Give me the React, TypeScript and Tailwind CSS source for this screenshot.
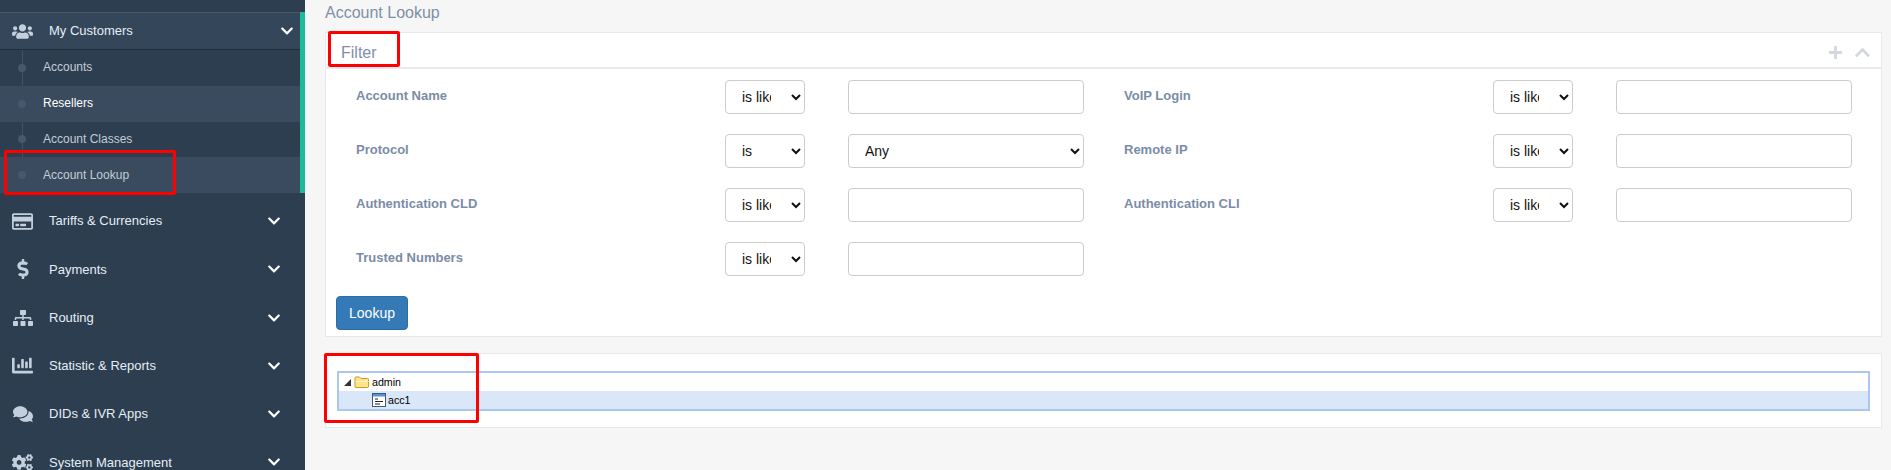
import type { ReactNode } from "react"
import {
  FaChartBar,
  FaChevronDown,
  FaChevronUp,
  FaCogs,
  FaComments,
  FaDollarSign,
  FaPlus,
  FaRegCreditCard,
  FaSitemap,
  FaUsers,
} from "react-icons/fa"

const subItems = [
  { label: "Accounts", shaded: false, strong: false },
  { label: "Resellers", shaded: true, strong: true },
  { label: "Account Classes", shaded: false, strong: false },
  { label: "Account Lookup", shaded: true, strong: false },
]

const menuItems = [
  { label: "Tariffs & Currencies", icon: <FaRegCreditCard className="h-[21px] w-[21px]" /> },
  { label: "Payments", icon: <FaDollarSign className="h-[20px] w-[20px]" /> },
  { label: "Routing", icon: <FaSitemap className="h-[20px] w-[20px]" /> },
  { label: "Statistic & Reports", icon: <FaChartBar className="h-[21px] w-[21px]" /> },
  { label: "DIDs & IVR Apps", icon: <FaComments className="h-[20px] w-[20px]" /> },
  { label: "System Management", icon: <FaCogs className="h-[21px] w-[21px]" /> },
]

function Sidebar() {
  return (
    <aside className="h-[470px] w-[305px] shrink-0 overflow-hidden bg-[#2c3e50] pt-3">
      <div className="border-r-[5px] border-r-[#1abc9c]">
        <div className="flex h-[38px] items-center border-t border-b border-t-[#4a5a6c] border-b-[#1f2d3d] bg-[#34465a] text-[13px] text-[#e6edf5]">
          <span className="flex w-[49px] justify-center pr-[5px] text-[#c3cfdd]">
            <FaUsers className="h-[21px] w-[21px]" />
          </span>
          <span>My Customers</span>
          <FaChevronDown className="ml-auto mr-[6px] h-[14px] w-[14px] text-white" />
        </div>
        <div className="relative">
          <div className="absolute bottom-0 left-[22px] top-0 w-px bg-[#3f5266]" />
          {subItems.map((item) => (
            <div
              key={item.label}
              className={`relative flex h-[35.75px] items-center pb-[1px] pl-[43px] text-[12px] ${item.shaded ? "bg-[#3a4b60]" : ""} ${item.strong ? "text-white" : "text-[#c4ccd6]"}`}
            >
              <span className="absolute left-[18px] top-1/2 h-[8px] w-[8px] -translate-y-1/2 rounded-full bg-[#46586c]" />
              {item.label}
            </div>
          ))}
        </div>
      </div>
      <div className="pt-[4px]">
        {menuItems.map((item) => (
          <div key={item.label} className="flex h-[48.25px] items-center text-[13px] text-[#e6edf5]">
            <span className="flex w-[49px] justify-center pr-[4px] text-[#c3cfdd]">{item.icon}</span>
            <span>{item.label}</span>
            <FaChevronDown className="ml-auto mr-[24px] h-[14px] w-[14px] text-white" />
          </div>
        ))}
      </div>
    </aside>
  )
}

function OpSelect({ value }: { value: string }) {
  return (
    <select
      defaultValue={value}
      className="h-[34px] w-[80px] shrink-0 rounded border border-[#ccc] bg-white pl-3 pr-[17px] text-[14px] text-[#111]"
    >
      <option>{value}</option>
    </select>
  )
}

function Field({ label, op, children }: { label: string; op: string; children?: ReactNode }) {
  return (
    <div className="flex h-[34px] items-start">
      <label className="w-[369px] shrink-0 pt-[6px] text-[13px] font-bold text-[#7b8ca7]">{label}</label>
      <OpSelect value={op} />
      <div className="ml-[43px] w-[236px]">
        {children ?? <input className="h-[34px] w-full rounded border border-[#ccc] bg-white" />}
      </div>
    </div>
  )
}

function FolderIcon() {
  return (
    <svg width="16" height="14" viewBox="0 0 16 14" className="block shrink-0">
      <path d="M1 11.5V3a1 1 0 0 1 1-1h3.5l1.5 1.5h6.5a1 1 0 0 1 1 1v7a1 1 0 0 1-1 1H2a1 1 0 0 1-1-1z" fill="#ffe58a" stroke="#c8991f" />
      <path d="M1.5 6.5h13" stroke="#fff6cf" />
    </svg>
  )
}

function NodeIcon() {
  return (
    <svg width="14" height="14" viewBox="0 0 14 14" className="block shrink-0">
      <rect x="0.5" y="0.5" width="13" height="13" fill="#fff" stroke="#3d5a80" />
      <rect x="1" y="1" width="12" height="2.5" fill="#5b8fd6" />
      <path d="M3 6h3M3 8.5h8M3 11h5" stroke="#222" />
    </svg>
  )
}

function RedBox({ className }: { className: string }) {
  return <div className={`pointer-events-none absolute rounded-[2px] border-[3px] border-[#ff0000] ${className}`} />
}

export default function App() {
  return (
    <div className="relative flex h-[470px] w-[1891px] overflow-hidden bg-[#f6f6f6] font-['Liberation_Sans',Arial,sans-serif]">
      <Sidebar />
      <main className="min-w-0 flex-1 pl-5 pr-[9px]">
        <h1 className="flex h-[32px] items-start pt-[4px] text-[16px] leading-[18px] text-[#7f8fa6]">Account Lookup</h1>

        <section className="h-[305px] border border-[#e7eaec] bg-white">
          <div className="flex h-[36px] items-center border-b-2 border-b-[#e7ebf0] pl-[15px] pr-[10px] pt-[5px] text-[16px] text-[#7f8fa6]">
            <span>Filter</span>
            <FaPlus className="ml-auto h-[15px] w-[15px] text-[#d3d7e2]" />
            <FaChevronUp className="ml-[11px] h-[17px] w-[17px] text-[#d3d7e2]" />
          </div>
          <div className="grid grid-cols-[768px_768px] gap-y-[20px] pl-[30px] pt-[11px]">
            <Field label="Account Name" op="is like" />
            <Field label="VoIP Login" op="is like" />
            <Field label="Protocol" op="is">
              <select
                defaultValue="Any"
                className="h-[34px] w-full rounded border border-[#ccc] bg-white px-3 text-[14px] text-[#111]"
              >
                <option>Any</option>
              </select>
            </Field>
            <Field label="Remote IP" op="is like" />
            <Field label="Authentication CLD" op="is like" />
            <Field label="Authentication CLI" op="is like" />
            <Field label="Trusted Numbers" op="is like" />
          </div>
          <button className="ml-[10px] mt-[20px] h-[34px] w-[72px] rounded border border-[#2e6da4] bg-[#337ab7] text-[14px] text-white">
            Lookup
          </button>
        </section>

        <section className="mt-[16px] h-[75px] border border-[#e7eaec] bg-white px-[11px] pt-[17px]">
          <div className="h-[40px] border-2 border-[#a9c7ef] text-[10.67px] text-black">
            <div className="flex h-[18px] items-center pl-[5px]">
              <svg width="7" height="7" viewBox="0 0 7 7" className="shrink-0">
                <path d="M7 0v7H0z" fill="#333" />
              </svg>
              <span className="ml-[3px]">
                <FolderIcon />
              </span>
              <span className="ml-[2px]">admin</span>
            </div>
            <div className="flex h-[18px] items-center bg-[#d9e7f9] pl-[33px]">
              <NodeIcon />
              <span className="ml-[2px]">acc1</span>
            </div>
          </div>
        </section>
      </main>

      <RedBox className="left-[4px] top-[150px] h-[45px] w-[172px]" />
      <RedBox className="left-[328px] top-[31px] h-[36px] w-[72px]" />
      <RedBox className="left-[324px] top-[353px] h-[70px] w-[155px]" />
    </div>
  )
}
